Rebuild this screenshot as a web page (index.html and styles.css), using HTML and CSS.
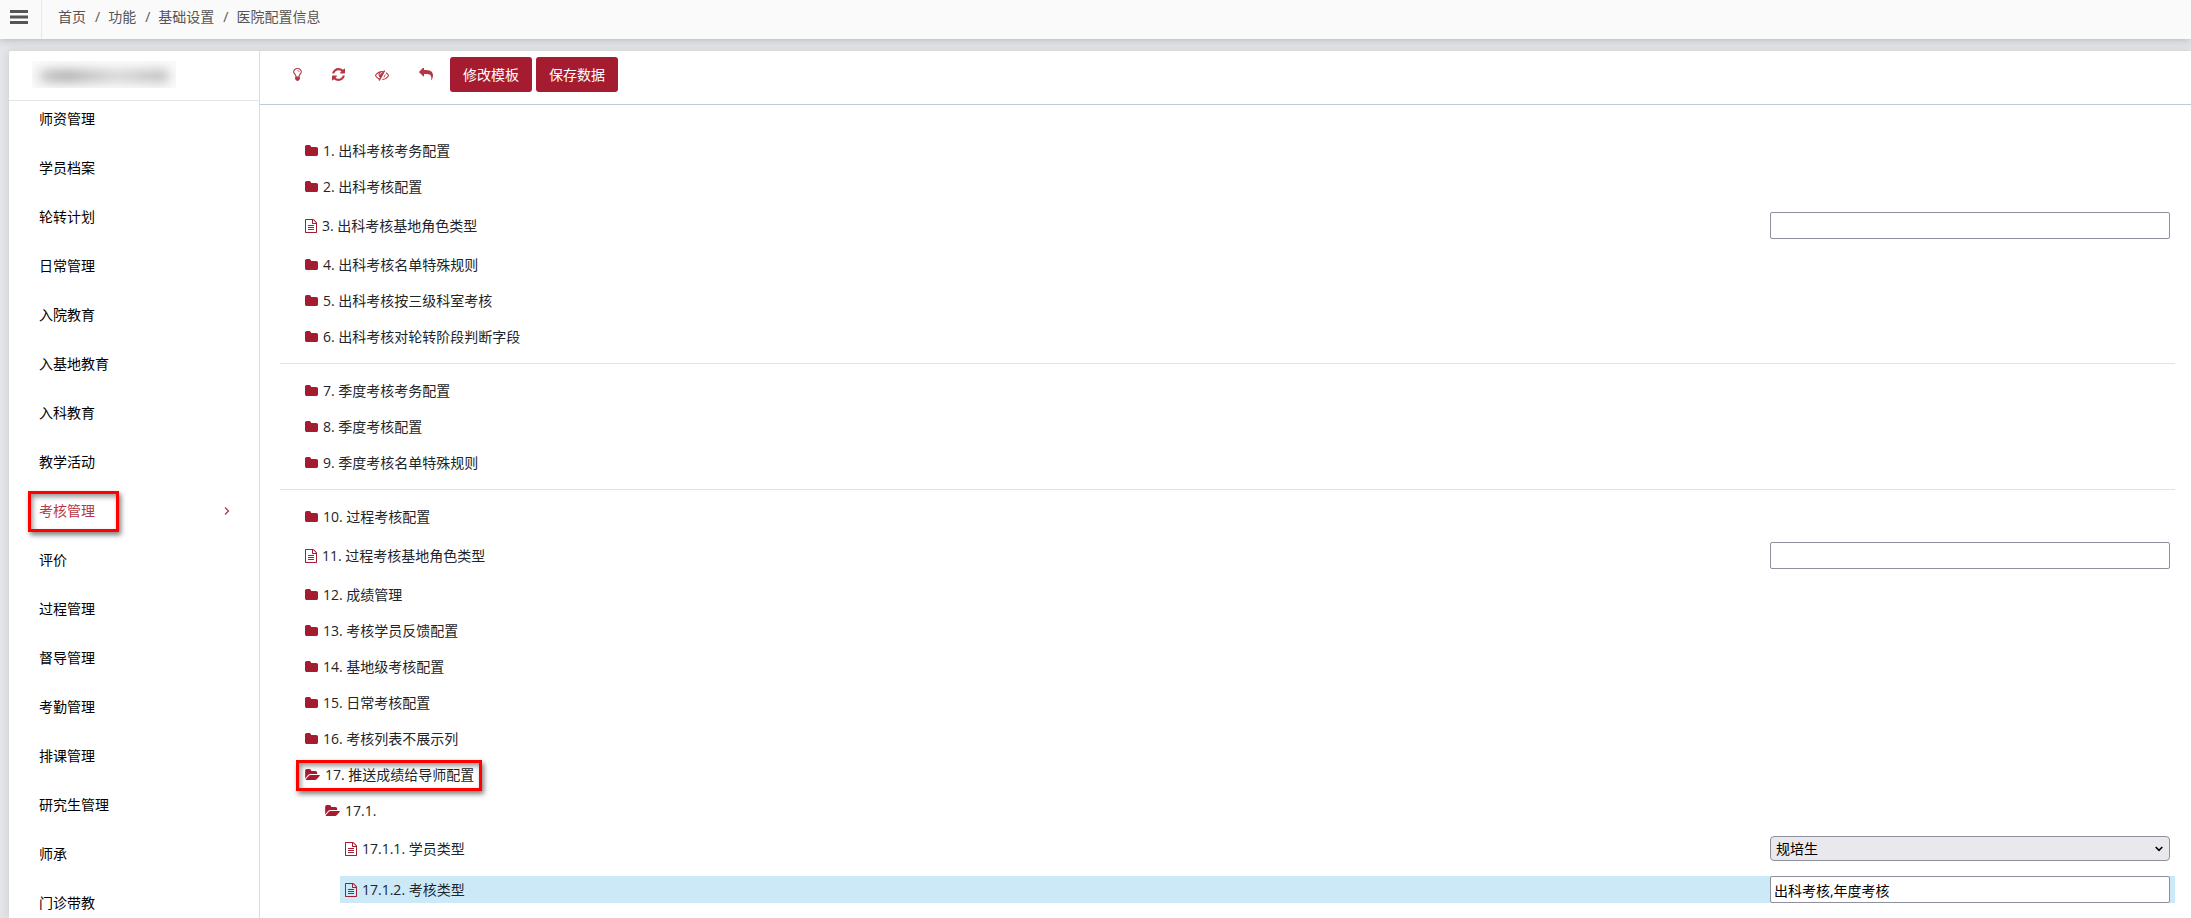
FILE: index.html
```html
<!DOCTYPE html>
<html lang="zh-CN">
<head>
    <meta charset="UTF-8">
    <meta name="viewport" content="width=device-width, initial-scale=1.0">
    <title>医院配置信息</title>
    <link rel="stylesheet" href="styles.css">
</head>
<body>
    <!-- Icon set -->
    <svg class="icon-defs" aria-hidden="true">
        <symbol id="folder" viewBox="64 128 1664 1408"><path d="M1728 608v704q0 92-66 158t-158 66h-1216q-92 0-158-66t-66-158v-960q0-92 66-158t158-66h320q92 0 158 66t66 158v32h672q92 0 158 66t66 158z"/></symbol>
        <symbol id="folder-open" viewBox="0 128 1879 1408"><path d="M1879 952q0 31-31 66l-336 396q-43 51-120.5 86.5t-143.5 35.5h-1088q-34 0-60.5-13t-26.5-43q0-31 31-66l336-396q43-51 120.5-86.5t143.5-35.5h1088q34 0 60.5 13t26.5 43zm-343-344v160h-832q-94 0-197 47.500t-164 119.500l-337 396-5 6q0-4-.5-12.500t-.5-12.500v-960q0-92 66-158t158-66h320q92 0 158 66t66 158v32h544q92 0 158 66t66 158z"/></symbol>
        <symbol id="file" viewBox="128 0 1536 1792"><path d="M1596 380q28 28 48 76t20 88v1152q0 40-28 68t-68 28h-1344q-40 0-68-28t-28-68v-1600q0-40 28-68t68-28h896q40 0 88 20t76 48zm-444-244v376h376q-10-29-22-41l-313-313q-12-12-41-22zm384 1528v-1024h-416q-40 0-68-28t-28-68v-416h-768v1536h1280zm-1024-864q0-14 9-23t23-9h704q14 0 23 9t9 23v64q0 14-9 23t-23 9h-704q-14 0-23-9t-9-23v-64zm736 224q14 0 23 9t9 23v64q0 14-9 23t-23 9h-704q-14 0-23-9t-9-23v-64q0-14 9-23t23-9h704zm0 256q14 0 23 9t9 23v64q0 14-9 23t-23 9h-704q-14 0-23-9t-9-23v-64q0-14 9-23t23-9h704z"/></symbol>
        <symbol id="bulb" viewBox="384 128 1024 1536"><path d="M1120 576q0 13-9.500 22.500t-22.500 9.500-22.500-9.500-9.500-22.500q0-46-54-71t-106-25q-13 0-22.500-9.500t-9.500-22.500 9.500-22.500 22.500-9.500q50 0 99.500 16t87 54 37.500 90zm160 0q0-72-34.500-134t-90-101.500-123-62-136.500-22.500-136.500 22.500-123 62-90 101.500-34.500 134q0 101 68 180 10 11 30.500 33t30.500 33q128 153 141 298h228q13-145 141-298 10-11 30.500-33t30.500-33q68-79 68-180zm128 0q0 155-103 268-45 49-74.500 87t-59.500 95.500-34 107.500q47 28 47 82 0 37-25 64 25 27 25 64 0 52-45 81 13 23 13 47 0 46-31.500 71t-77.500 25q-20 44-60 70t-87 26-87-26-60-70q-46 0-77.500-25t-31.500-71q0-24 13-47-45-29-45-81 0-37 25-64-25-27-25-64 0-54 47-82-4-50-34-107.500t-59.500-95.500-74.500-87q-103-113-103-268 0-99 44.500-184.500t117-142 164-89 186.500-32.500 186.500 32.500 164 89 117 142 44.500 184.500z"/></symbol>
        <symbol id="refresh" viewBox="128 128 1536 1536"><path d="M1639 1056q0 5-1 7-64 268-268 434.500t-478 166.500q-146 0-282.500-55t-243.500-157l-129 129q-19 19-45 19t-45-19-19-45v-448q0-26 19-45t45-19h448q26 0 45 19t19 45-19 45l-137 137q71 66 161 102t187 36q134 0 250-65t186-179q11-17 53-117 8-23 30-23h192q13 0 22.500 9.500t9.500 22.500zm25-800v448q0 26-19 45t-45 19h-448q-26 0-45-19t-19-45 19-45l138-138q-148-137-349-137-134 0-250 65t-186 179q-11 17-53 117-8 23-30 23h-199q-13 0-22.500-9.500t-9.500-22.500v-7q65-268 270-434.500t480-166.500q146 0 284 55.500t245 156.500l130-129q19-19 45-19t45 19 19 45z"/></symbol>
        <symbol id="eye-slash" viewBox="0 0 1792 1792"><path d="M555 1335l78-141q-87-63-136-159t-49-203q0-121 61-225-229 117-381 353 167 258 427 375zm389-759q0-20-14-34t-34-14q-125 0-214.500 89.500t-89.500 214.500q0 20 14 34t34 14 34-14 14-34q0-86 61-147t147-61q20 0 34-14t14-34zm363-191q0 7-1 9-106 189-316 567t-315 566l-49 89q-10 16-28 16-12 0-134-70-16-10-16-28 0-12 44-87-143-65-263.500-173t-208.500-245q-20-31-20-69t20-69q153-235 380-371t496-136q89 0 180 17l54-97q10-16 28-16 5 0 18 6t31 15.500 33 18.500 31.500 18.500 19.500 11.500q16 10 16 27zm37 447q0 139-79 253.500t-209 164.500l280-502q8 45 8 84zm448 128q0 35-20 69-39 64-109 145-150 172-347.500 267t-419.500 95l74-132q212-18 392.500-137t301.500-307q-115-179-282-294l63-112q95 64 182.500 153t144.500 184q20 34 20 69z"/></symbol>
        <symbol id="reply" viewBox="0 128 1792 1792"><path d="M1792 1120q0 166-127 451-3 7-10.500 24t-13.500 30-13 22q-12 17-28 17-15 0-23.500-10t-8.500-25q0-9 2.500-26.500t2.500-23.500q5-68 5-123 0-101-17.500-181t-48.500-138.500-80-101-105.500-69.500-133-42.500-154-21.500-175.500-6h-224v256q0 26-19 45t-45 19-45-19l-512-512q-19-19-19-45t19-45l512-512q19-19 45-19t45 19 19 45v256h224q713 0 875 403 53 134 53 333z"/></symbol>
    </svg>

    <header class="topbar">
        <button class="menu-btn" aria-label="菜单">
            <svg width="18" height="14" viewBox="0 0 18 14"><path d="M0 0h18v3H0zM0 5.500h18v3H0zM0 11h18v3H0z"/></svg>
        </button>
        <nav class="breadcrumb">
            <a href="#">首页</a>
            <a href="#">功能</a>
            <a href="#">基础设置</a>
            <a href="#">医院配置信息</a>
        </nav>
    </header>

    <div class="card">
        <aside class="sidebar">
            <div class="sidebar-head"><div class="blurred"><span></span></div></div>
            <ul class="menu">
                <li><a href="#">师资管理</a></li>
                <li><a href="#">学员档案</a></li>
                <li><a href="#">轮转计划</a></li>
                <li><a href="#">日常管理</a></li>
                <li><a href="#">入院教育</a></li>
                <li><a href="#">入基地教育</a></li>
                <li><a href="#">入科教育</a></li>
                <li><a href="#">教学活动</a></li>
                <li class="active">
                    <a href="#">考核管理</a>
                    <svg width="6" height="8" viewBox="0 0 6 8"><path d="M1 .5L4.500 4 1 7.500" fill="none" stroke="currentColor" stroke-width="1.300"/></svg>
                </li>
                <li><a href="#">评价</a></li>
                <li><a href="#">过程管理</a></li>
                <li><a href="#">督导管理</a></li>
                <li><a href="#">考勤管理</a></li>
                <li><a href="#">排课管理</a></li>
                <li><a href="#">研究生管理</a></li>
                <li><a href="#">师承</a></li>
                <li><a href="#">门诊带教</a></li>
            </ul>
        </aside>

        <main class="main">
            <div class="toolbar">
                <button class="icon-btn" aria-label="提示"><svg width="9" height="13"><use href="#bulb"/></svg></button>
                <button class="icon-btn" aria-label="刷新"><svg width="13" height="13"><use href="#refresh"/></svg></button>
                <button class="icon-btn" aria-label="隐藏"><svg width="14" height="14"><use href="#eye-slash"/></svg></button>
                <button class="icon-btn" aria-label="返回"><svg width="14" height="14"><use href="#reply"/></svg></button>
                <button class="btn">修改模板</button>
                <button class="btn">保存数据</button>
            </div>

            <div class="content">
                <ul class="tree">
                    <li><button class="node"><svg class="folder"><use href="#folder"/></svg>1. 出科考核考务配置</button></li>
                    <li><button class="node"><svg class="folder"><use href="#folder"/></svg>2. 出科考核配置</button></li>
                    <li class="field">
                        <label class="node" for="f3"><svg class="file"><use href="#file"/></svg>3. 出科考核基地角色类型</label>
                        <input type="text" id="f3">
                    </li>
                    <li><button class="node"><svg class="folder"><use href="#folder"/></svg>4. 出科考核名单特殊规则</button></li>
                    <li><button class="node"><svg class="folder"><use href="#folder"/></svg>5. 出科考核按三级科室考核</button></li>
                    <li><button class="node"><svg class="folder"><use href="#folder"/></svg>6. 出科考核对轮转阶段判断字段</button></li>
                </ul>
                <hr>
                <ul class="tree">
                    <li><button class="node"><svg class="folder"><use href="#folder"/></svg>7. 季度考核考务配置</button></li>
                    <li><button class="node"><svg class="folder"><use href="#folder"/></svg>8. 季度考核配置</button></li>
                    <li><button class="node"><svg class="folder"><use href="#folder"/></svg>9. 季度考核名单特殊规则</button></li>
                </ul>
                <hr>
                <ul class="tree">
                    <li><button class="node"><svg class="folder"><use href="#folder"/></svg>10. 过程考核配置</button></li>
                    <li class="field">
                        <label class="node" for="f11"><svg class="file"><use href="#file"/></svg>11. 过程考核基地角色类型</label>
                        <input type="text" id="f11">
                    </li>
                    <li><button class="node"><svg class="folder"><use href="#folder"/></svg>12. 成绩管理</button></li>
                    <li><button class="node"><svg class="folder"><use href="#folder"/></svg>13. 考核学员反馈配置</button></li>
                    <li><button class="node"><svg class="folder"><use href="#folder"/></svg>14. 基地级考核配置</button></li>
                    <li><button class="node"><svg class="folder"><use href="#folder"/></svg>15. 日常考核配置</button></li>
                    <li><button class="node"><svg class="folder"><use href="#folder"/></svg>16. 考核列表不展示列</button></li>
                    <li>
                        <button class="node marked"><svg class="folder-open"><use href="#folder-open"/></svg>17. 推送成绩给导师配置</button>
                        <ul class="tree">
                            <li>
                                <button class="node"><svg class="folder-open"><use href="#folder-open"/></svg>17.1.</button>
                                <ul class="tree">
                                    <li class="field">
                                        <label class="node" for="f1711"><svg class="file"><use href="#file"/></svg>17.1.1. 学员类型</label>
                                        <div class="select">
                                            <select id="f1711"><option>规培生</option></select>
                                            <svg class="select-arrow" width="8" height="6" viewBox="0 0 8 6"><path d="M.7 1L4 4.300 7.300 1" fill="none" stroke="#000" stroke-width="1.600"/></svg>
                                        </div>
                                    </li>
                                    <li class="field current">
                                        <label class="node" for="f1712"><svg class="file"><use href="#file"/></svg>17.1.2. 考核类型</label>
                                        <input type="text" id="f1712" value="出科考核,年度考核">
                                    </li>
                                </ul>
                            </li>
                        </ul>
                    </li>
                </ul>
            </div>
        </main>
    </div>
</body>
</html>
```
FILE: styles.css
```css
*,
*::before,
*::after {
    box-sizing: border-box;
}

body {
    margin: 0;
    height: 100vh;
    display: flex;
    flex-direction: column;
    overflow: hidden;
    font-family: "Open Sans", "Noto Sans CJK SC", sans-serif;
    font-size: 14px;
    line-height: 21px;
    color: #212529;
    background: #e3e5e8;
}

a {
    color: inherit;
    text-decoration: none;
}

ul {
    list-style: none;
    margin: 0;
    padding: 0;
}

button,
input,
select {
    font: inherit;
    color: inherit;
}

button {
    border: none;
    background: none;
    padding: 0;
    cursor: pointer;
}

svg {
    display: block;
    flex: none;
    fill: currentColor;
}

.icon-defs {
    position: absolute;
    width: 0;
    height: 0;
}

/* Top bar */
.topbar {
    flex: none;
    display: flex;
    height: 39px;
    background: #fafafa;
    color: #555;
    box-shadow: 0 1px 8px rgba(0, 0, 0, 0.2);
}

.menu-btn {
    width: 42px;
    padding: 0 0 5px 10px;
    border-right: 1px solid #e8e8e8;
}

.breadcrumb {
    display: flex;
    padding: 6px 0 0 16px;
}

.breadcrumb a + a::before {
    content: "/";
    padding: 0 8px 0 9px;
}

/* Card */
.card {
    flex: 1;
    min-height: 0;
    display: flex;
    margin: 12px 0 0 9px;
    background: #fff;
    border-top-left-radius: 2px;
    box-shadow: 0 0 8px rgba(60, 70, 40, 0.15);
}

/* Sidebar */
.sidebar {
    flex: none;
    width: 251px;
    overflow: hidden;
    border-right: 1px solid #dcdcdc;
}

.sidebar-head {
    height: 50px;
    padding: 10px 23px;
    border-bottom: 1px solid #e4e4e4;
}

.blurred {
    width: 144px;
    height: 27px;
    padding: 10px 8px;
    overflow: hidden;
    background: #fafafa;
}

.blurred span {
    display: block;
    height: 10px;
    background: linear-gradient(90deg, #bbb, #999 20%, #bbb 45%, #ccc 60%, #aaa);
    filter: blur(6px);
}

.menu {
    display: flex;
    flex-direction: column;
    gap: 28px;
    padding: 7px 29px 7px 30px;
    color: #000;
}

.menu li {
    display: flex;
    align-items: center;
    justify-content: space-between;
}

.menu .active {
    position: relative;
    color: #b73645;
}

.menu .active::after,
.marked::after {
    content: "";
    position: absolute;
    border: 3px solid #f00;
    box-shadow: 2px 3px 5px rgba(0, 0, 0, 0.5), inset 2px 3px 5px rgba(0, 0, 0, 0.4);
}

.menu .active::after {
    inset: -9px auto -11px -11px;
    width: 91px;
}

/* Toolbar */
.main {
    flex: 1;
    min-width: 0;
}

.toolbar {
    display: flex;
    gap: 4px;
    padding: 6px 20px 12px;
    border-bottom: 1px solid #b9cdd6;
}

.icon-btn {
    padding: 0 13px;
    color: #b73645;
}

.btn {
    height: 35px;
    padding: 0 13px;
    border-radius: 3px;
    background: #a51c30;
    color: #fff;
}

/* Config tree */
.content {
    padding: 35px 16px 0 20px;
}

.content > .tree,
.tree .tree {
    padding-left: 20px;
}

.tree li {
    margin-bottom: 15px;
}

.tree .tree {
    margin-top: 15px;
}

.node {
    position: relative;
    display: flex;
    align-items: center;
    gap: 5px;
    padding-left: 5px;
}

.node svg {
    color: #a51c30;
}

.folder {
    width: 13px;
    height: 11px;
}

.folder-open {
    width: 15px;
    height: 11px;
}

.file {
    width: 12px;
    height: 14px;
}

.marked::after {
    inset: -4px -8px -6px -4px;
}

.field {
    display: flex;
    align-items: center;
    justify-content: space-between;
    padding-right: 5px;
}

.current {
    background: #cce9f8;
}

input,
.select {
    width: 400px;
}

input {
    height: 27px;
    padding: 0 3px;
    border: 1px solid #8f8f9d;
    border-radius: 2px;
    background: #fff;
    color: #000;
}

.select {
    position: relative;
}

.select select {
    appearance: none;
    display: block;
    width: 100%;
    height: 25px;
    padding: 0 5px;
    border: 1px solid #8f8f9d;
    border-radius: 4px;
    background: #e9e9ed;
    color: #000;
}

.select-arrow {
    position: absolute;
    top: 10px;
    right: 7px;
}

hr {
    margin: 16px 0;
    border: none;
    border-top: 1px solid #e2e2e2;
}
```
